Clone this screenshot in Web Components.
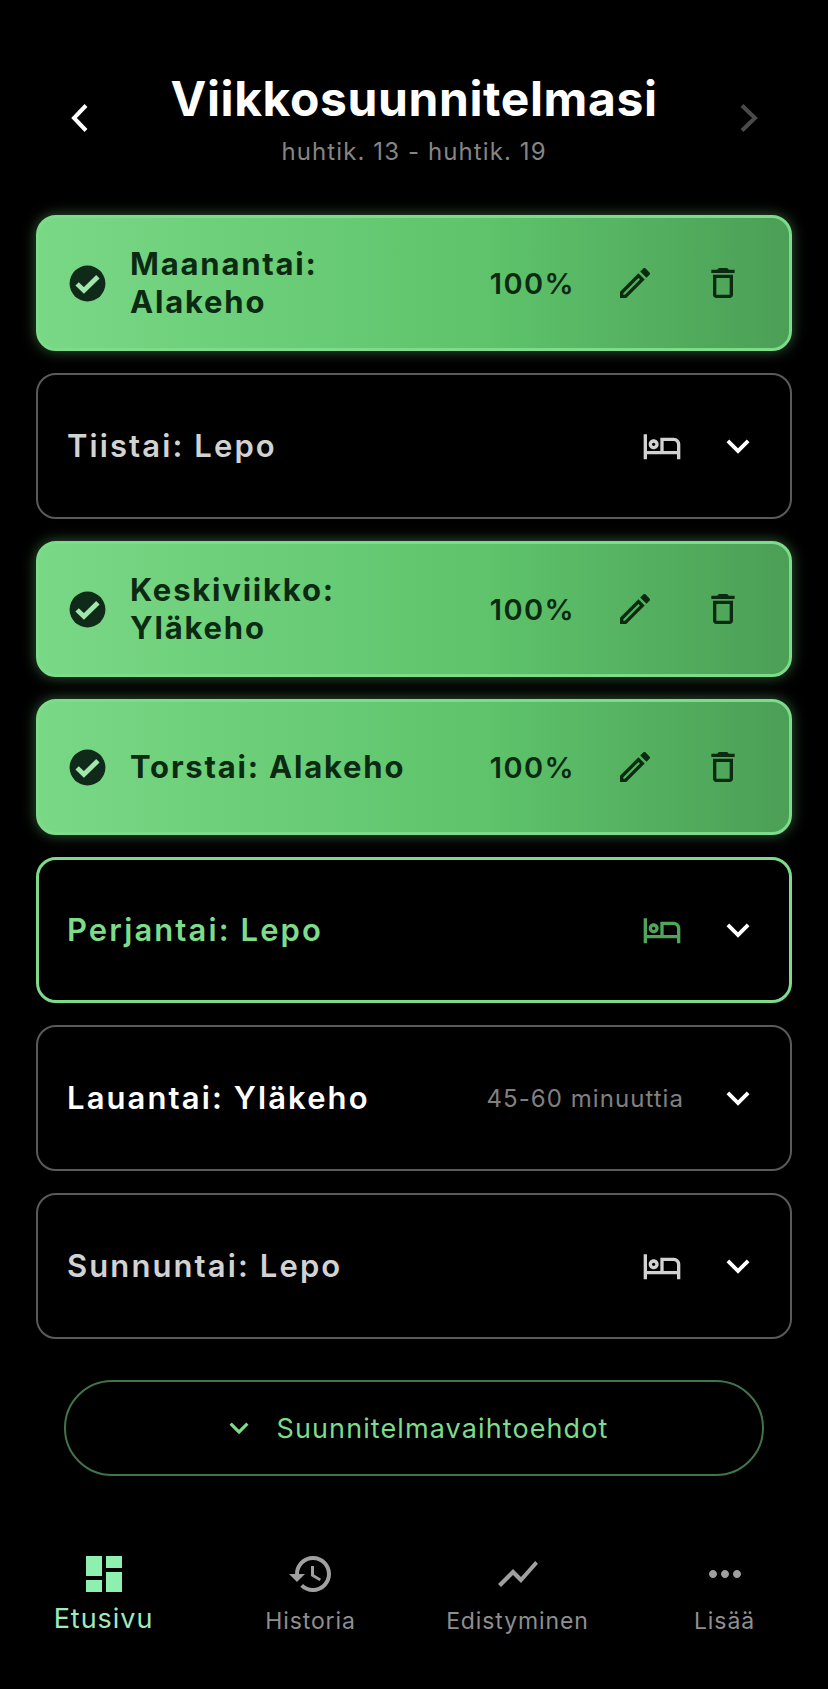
<!DOCTYPE html>
<html lang="fi">
<head>
<meta charset="utf-8">
<title>Viikkosuunnitelmasi</title>
<style>
  html, body { margin: 0; background: #000; }
  body { font-family: Inter, "Liberation Sans", sans-serif; width: 828px; height: 1689px; overflow: hidden; }
</style>
</head>
<body>
<plan-screen>
  <week-header slot="header" title="Viikkosuunnitelmasi" range="huhtik. 13 - huhtik. 19"></week-header>
  <day-card state="done">Maanantai:<br>Alakeho</day-card>
  <day-card state="rest" icon="bed">Tiistai: Lepo</day-card>
  <day-card state="done">Keskiviikko:<br>Yläkeho</day-card>
  <day-card state="done">Torstai: Alakeho</day-card>
  <day-card state="today" icon="bed">Perjantai: Lepo</day-card>
  <day-card state="todo" note="45-60 minuuttia">Lauantai: Yläkeho</day-card>
  <day-card state="rest" icon="bed">Sunnuntai: Lepo</day-card>
  <options-button slot="footer">Suunnitelmavaihtoehdot</options-button>
  <tab-bar slot="nav"></tab-bar>
</plan-screen>

<script>
  const ICONS = {
    edit: 'M3 17.25V21h3.75L17.81 9.94l-3.75-3.75L3 17.25zM5.92 19H5v-.92l9.06-9.06.92.92L5.92 19zM20.71 5.63l-2.34-2.34c-.2-.2-.45-.29-.71-.29s-.51.1-.7.29l-1.83 1.83 3.75 3.75 1.83-1.83c.39-.39.39-1.02 0-1.41z',
    trash: 'M6 19c0 1.1.9 2 2 2h8c1.1 0 2-.9 2-2V7H6v12zM8 9h8v10H8V9zm7.5-5l-1-1h-5l-1 1H5v2h14V4z',
    bed: 'M7 14c1.66 0 3-1.34 3-3S8.66 8 7 8s-3 1.34-3 3 1.34 3 3 3zm0-4c.55 0 1 .45 1 1s-.45 1-1 1-1-.45-1-1 .45-1 1-1zm12-3h-8v8H3V5H1v15h2v-3h18v3h2v-9c0-2.21-1.79-4-4-4zm2 8h-8V9h6c1.1 0 2 .9 2 2v4z',
    expand: 'M16.59 8.59L12 13.17 7.41 8.59 6 10l6 6 6-6z',
    dashboard: 'M3 13h8V3H3v10zm0 8h8v-6H3v6zm10 0h8V11h-8v10zm0-18v6h8V3h-8z',
    history: 'M13 3c-4.97 0-9 4.03-9 9H1l3.89 3.89.07.14L9 12H6c0-3.87 3.13-7 7-7s7 3.13 7 7-3.13 7-7 7c-1.93 0-3.68-.79-4.94-2.06l-1.42 1.42C8.27 19.99 10.51 21 13 21c4.97 0 9-4.03 9-9s-4.03-9-9-9zm-1 5v5l4.28 2.54.72-1.21-3.5-2.08V8H12z',
    chart: 'M3.5 18.49l6-6.01 4 4L22 6.92l-1.41-1.41-7.09 7.97-4-4L2 16.99z',
    more: 'M6 10c-1.1 0-2 .9-2 2s.9 2 2 2 2-.9 2-2-.9-2-2-2zm12 0c-1.1 0-2 .9-2 2s.9 2 2 2 2-.9 2-2-.9-2-2-2zm-6 0c-1.1 0-2 .9-2 2s.9 2 2 2 2-.9 2-2-.9-2-2-2z'
  };

  const icon = (name, size) =>
    `<svg width="${size}" height="${size}" viewBox="0 0 24 24" fill="currentColor" style="display:block;flex:none"><path d="${ICONS[name]}"/></svg>`;

  class PlanScreen extends HTMLElement {
    constructor() {
      super();
      this.attachShadow({ mode: 'open' });
    }

    connectedCallback() {
      this.shadowRoot.innerHTML = `
        <style>
          :host { display: flex; flex-direction: column; height: 1689px; }
          .list { display: flex; flex-direction: column; gap: 22px; padding: 0 36px; }
          .footer { padding: 41px 64px 0; }
        </style>
        <slot name="header"></slot>
        <div class="list"><slot></slot></div>
        <div class="footer"><slot name="footer"></slot></div>
        <slot name="nav"></slot>
      `;
    }
  }

  class WeekHeader extends HTMLElement {
    constructor() {
      super();
      this.attachShadow({ mode: 'open' });
    }

    connectedCallback() {
      this.shadowRoot.innerHTML = `
        <style>
          :host { display: flex; height: 215px; box-sizing: border-box; padding: 69px 64px 0; justify-content: space-between; }
          .titles { display: flex; flex-direction: column; align-items: center; }
          h1 { margin: 0; font-size: 48px; line-height: 60px; font-weight: 700; color: #fff; letter-spacing: .6px; }
          p { margin: 8px 0 0; font-size: 24px; line-height: 30px; color: #858585; letter-spacing: 1.1px; }
          svg { display: block; margin-top: 33px; flex: none; }
        </style>
        <svg width="32" height="32" viewBox="0 0 32 32" fill="none" stroke="#fff" stroke-width="4"><path d="M22 3.5 10 16l12 12.5"/></svg>
        <div class="titles">
          <h1>${this.getAttribute('title')}</h1>
          <p>${this.getAttribute('range')}</p>
        </div>
        <svg width="32" height="32" viewBox="0 0 32 32" fill="none" stroke="#4a4a4a" stroke-width="4"><path d="M10 3.5 23 16 10 28.5"/></svg>
      `;
    }
  }

  class DayCard extends HTMLElement {
    constructor() {
      super();
      this.attachShadow({ mode: 'open' });
    }

    connectedCallback() {
      const state = this.getAttribute('state');
      const note = this.getAttribute('note');
      const kind = this.getAttribute('icon');
      let left = '';
      let right = '';
      if (state === 'done') {
        left = `<svg class="check" width="43" height="43" viewBox="0 0 24 24"><circle cx="12" cy="12" r="10" fill="#0f2a18"/><path d="M6.2 12.2 10 15.9l7.8-7.7" fill="none" stroke="#a3e6ad" stroke-width="2.7"/></svg>`;
        right = `<span class="pct">100%</span>
          <span class="act">${icon('edit', 40)}</span>
          <span class="act">${icon('trash', 40)}</span>`;
      } else {
        right = `${note ? `<span class="note">${note}</span>` : ''}
          ${kind ? `<span class="kind">${icon(kind, 40)}</span>` : ''}
          <span class="chev">${icon('expand', 46)}</span>`;
      }
      this.shadowRoot.innerHTML = `
        <style>
          :host { display: block; }
          .card {
            display: flex;
            align-items: center;
            box-sizing: border-box;
            height: 146px;
            padding: 0 29px;
            border: 2px solid #5a5a5a;
            border-radius: 20px;
            color: #d2d2d2;
          }
          .name { flex: 1; min-width: 0; font-size: 31px; line-height: 38px; font-weight: 600; letter-spacing: 2.1px; }
          .chev { color: #fff; margin-left: 33px; }
          .note { font-size: 24px; color: #808080; letter-spacing: 1.05px; margin-right: -2px; }
          .card.todo .name { color: #fff; }
          .card.today { border: 3px solid #7ddc8a; padding: 0 28px; color: #7ddc8a; }
          .card.today .kind { color: #4fa65a; }
          .card.done {
            height: 136px;
            padding: 0 46px 0 27px;
            border: 3px solid #7ddc8a;
            background: linear-gradient(90deg, #79d886, #5ec36b 60%, #4b9f56);
            box-shadow: 0 0 14px rgba(125, 220, 138, .42);
            color: #0c2a12;
          }
          .card.done .name { font-weight: 700; letter-spacing: 1.8px; }
          .check { display: block; flex: none; margin-right: 21px; }
          .pct { font-size: 29px; font-weight: 600; letter-spacing: 1.4px; }
          .act { margin-left: 40px; }
          .act + .act { margin-left: 48px; }
        </style>
        <div class="card ${state}">
          ${left}
          <div class="name"><slot></slot></div>
          ${right}
        </div>
      `;
    }
  }

  class OptionsButton extends HTMLElement {
    constructor() {
      super();
      this.attachShadow({ mode: 'open' });
    }

    connectedCallback() {
      this.shadowRoot.innerHTML = `
        <style>
          :host { display: block; }
          .btn {
            display: flex;
            align-items: center;
            justify-content: center;
            gap: 19px;
            height: 96px;
            box-sizing: border-box;
            border: 2px solid #3f7548;
            border-radius: 48px;
            color: #7ddc8a;
            font-size: 27px;
            letter-spacing: 1.1px;
          }
        </style>
        <div class="btn">${icon('expand', 38)}<span><slot></slot></span></div>
      `;
    }
  }

  class TabBar extends HTMLElement {
    constructor() {
      super();
      this.attachShadow({ mode: 'open' });
    }

    connectedCallback() {
      const tabs = [
        ['dashboard', 'Etusivu', true],
        ['history', 'Historia', false],
        ['chart', 'Edistyminen', false],
        ['more', 'Lisää', false]
      ];
      this.shadowRoot.innerHTML = `
        <style>
          :host { display: grid; grid-template-columns: repeat(4, 207px); padding-top: 74px; }
          .tab { display: flex; flex-direction: column; align-items: center; color: #8f8f8f; font-size: 23px; line-height: 30px; letter-spacing: .9px; gap: 8px; }
          .tab svg { color: #a0a0a0; }
          .tab.on { color: #9feabc; font-size: 27px; letter-spacing: .95px; gap: 6px; }
          .tab.on svg { color: #8df0ae; }
        </style>
        ${tabs.map(([name, label, on]) => `
          <div class="tab ${on ? 'on' : ''}">${icon(name, 48)}<span>${label}</span></div>
        `).join('')}
      `;
    }
  }

  customElements.define('plan-screen', PlanScreen);
  customElements.define('week-header', WeekHeader);
  customElements.define('day-card', DayCard);
  customElements.define('options-button', OptionsButton);
  customElements.define('tab-bar', TabBar);
</script>
</body>
</html>
